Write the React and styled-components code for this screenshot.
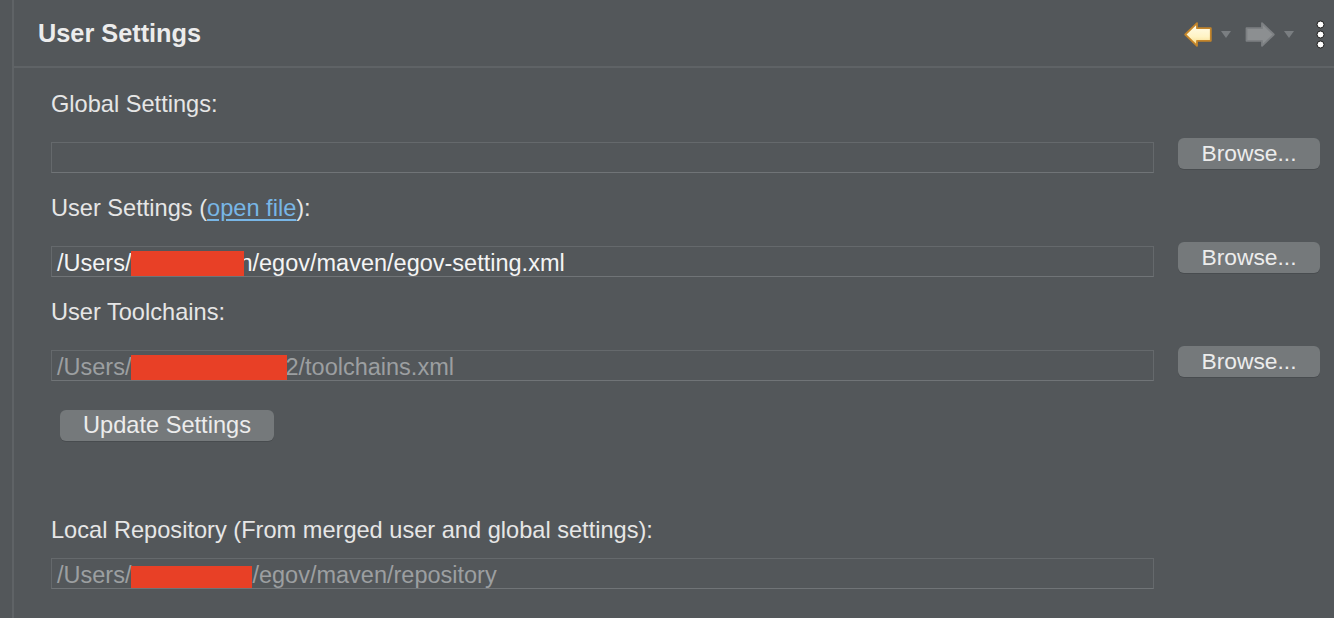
import React from "react";
import styled, { createGlobalStyle } from "styled-components";

const GlobalStyle = createGlobalStyle`
  html, body {
    margin: 0;
    padding: 0;
    background: #53575a;
  }
  body {
    font-family: "Liberation Sans", Arial, sans-serif;
  }
`;

const BackArrow = () => (
  <svg width="28" height="25" viewBox="0 0 28 25">
    <defs>
      <linearGradient id="backFill" x1="0" y1="0" x2="0" y2="1">
        <stop offset="0" stopColor="#fffdf0" />
        <stop offset="0.6" stopColor="#fff3c4" />
        <stop offset="1" stopColor="#f6d57e" />
      </linearGradient>
    </defs>
    <path
      d="M1.2 12.5 L13 1.2 L13 6.2 L26.8 6.2 L26.8 18.8 L13 18.8 L13 23.8 Z"
      fill="url(#backFill)"
      stroke="#c4852a"
      strokeWidth="1.8"
      strokeLinejoin="round"
    />
  </svg>
);

const ForwardArrow = () => (
  <svg width="30" height="25" viewBox="0 0 30 25">
    <path
      d="M28.8 12.5 L17 1.2 L17 6.2 L1.5 6.2 L1.5 18.8 L17 18.8 L17 23.8 Z"
      fill="#8c8f91"
      stroke="#7d8083"
      strokeWidth="1.8"
      strokeLinejoin="round"
    />
  </svg>
);

const DropTriangle = () => (
  <svg width="10" height="7" viewBox="0 0 10 7">
    <path d="M0 0 L10 0 L5 7 Z" fill="#7a7e81" />
  </svg>
);

const MoreDots = () => (
  <DotsWrap>
    <svg width="9" height="29" viewBox="0 0 9 29">
      <circle cx="4.5" cy="4.5" r="3.5" fill="#fff" stroke="#1e1e1e" strokeWidth="1" />
      <circle cx="4.5" cy="14.5" r="3.5" fill="#fff" stroke="#1e1e1e" strokeWidth="1" />
      <circle cx="4.5" cy="24.5" r="3.5" fill="#fff" stroke="#1e1e1e" strokeWidth="1" />
    </svg>
  </DotsWrap>
);

const Redacted = ({ width, top, height, overlap }) => (
  <Redaction $width={width} $top={top} $height={height} $overlap={overlap} />
);

const App = () => {
  return (
    <>
      <GlobalStyle />
      <Page>
        <Gutter />
        <Panel>
          <Header>
            <Title>User Settings</Title>
            <Toolbar>
              <ToolGroup>
                <BackArrow />
                <DropTriangle />
              </ToolGroup>
              <ToolGroup>
                <ForwardArrow />
                <DropTriangle />
              </ToolGroup>
              <MoreDots />
            </Toolbar>
          </Header>
          <Content>
            <Group>
              <Label>Global Settings:</Label>
              <FieldRow>
                <Field />
                <Button>Browse...</Button>
              </FieldRow>
            </Group>
            <Group>
              <Label>
                User Settings (<Link href="#">open file</Link>):
              </Label>
              <FieldRow>
                <Field>
                  /Users/
                  <Redacted width={113} top={1} height={27} overlap={5} />
                  n/egov/maven/egov-setting.xml
                </Field>
                <Button>Browse...</Button>
              </FieldRow>
            </Group>
            <Group>
              <Label>User Toolchains:</Label>
              <FieldRow>
                <Field $disabled>
                  /Users/
                  <Redacted width={156} top={1} height={28} overlap={2} />
                  2/toolchains.xml
                </Field>
                <Button>Browse...</Button>
              </FieldRow>
            </Group>
            <UpdateButton>Update Settings</UpdateButton>
            <LocalLabel>
              Local Repository (From merged user and global settings):
            </LocalLabel>
            <LocalField $disabled>
              /Users/
              <Redacted width={121} top={4} height={25} overlap={0} />
              /egov/maven/repository
            </LocalField>
          </Content>
        </Panel>
      </Page>
    </>
  );
};

export default App;

// style
const Page = styled.div`
  display: flex;
  width: 1334px;
  height: 618px;
  overflow: hidden;
  background: #53575a;
`;

const Gutter = styled.div`
  width: 12px;
  flex: none;
  border-right: 2px solid #5f6366;
`;

const Panel = styled.div`
  flex: 1;
  display: flex;
  flex-direction: column;
`;

const Header = styled.div`
  height: 66px;
  display: flex;
  align-items: center;
  justify-content: space-between;
  padding: 0 9px 0 24px;
  border-bottom: 2px solid #5f6366;
  box-sizing: content-box;
`;

const Title = styled.h1`
  margin: 0;
  font-size: 25.3px;
  font-weight: 700;
  color: #ececec;
  line-height: 30px;
`;

const Toolbar = styled.div`
  display: flex;
  align-items: center;
  gap: 14px;
  padding-top: 2px;
`;

const ToolGroup = styled.div`
  display: flex;
  align-items: center;
  gap: 9px;
`;

const DotsWrap = styled.div`
  display: flex;
  margin-left: 8px;
`;

const Content = styled.div`
  display: flex;
  flex-direction: column;
  padding: 21px 14px 0 37px;
`;

const Group = styled.div`
  display: flex;
  flex-direction: column;
  margin-bottom: 20px;
`;

const Label = styled.div`
  font-size: 23.6px;
  line-height: 30px;
  color: #e6e6e6;
  margin-bottom: 19px;
`;

const LocalLabel = styled(Label)`
  margin-top: 74px;
  margin-bottom: 13px;
`;

const Link = styled.a`
  color: #78b6e6;
  text-decoration: underline;
  text-underline-offset: 3px;
`;

const FieldRow = styled.div`
  display: grid;
  grid-template-columns: 1fr 142px;
  column-gap: 24px;
  align-items: start;
`;

const Field = styled.div`
  margin-top: 4px;
  height: 31px;
  box-sizing: border-box;
  border: 1px solid #65696c;
  border-bottom-color: #707477;
  padding: 3px 5px 0;
  font-size: 23.5px;
  line-height: 27px;
  white-space: nowrap;
  overflow: hidden;
  color: ${(p) => (p.$disabled ? "#9c9fa1" : "#f4f4f4")};
`;

const LocalField = styled(Field)`
  margin-top: 0;
  width: 1103px;
`;

const Redaction = styled.span`
  display: inline-block;
  vertical-align: top;
  position: relative;
  z-index: 1;
  top: ${(p) => p.$top}px;
  width: ${(p) => p.$width}px;
  height: ${(p) => p.$height}px;
  margin-right: -${(p) => p.$overlap}px;
  background: #e84026;
`;

const Button = styled.button`
  height: 31px;
  border: none;
  border-radius: 6px;
  background: #75797b;
  color: #ececec;
  font-family: "Liberation Sans", Arial, sans-serif;
  font-size: 22.8px;
  line-height: 31px;
  padding: 0;
  cursor: pointer;
  box-shadow: 0 1px 0 rgba(0, 0, 0, 0.12);
`;

const UpdateButton = styled(Button)`
  align-self: flex-start;
  width: 214px;
  margin-top: 9px;
  margin-left: 9px;
  font-size: 23.6px;
`;
